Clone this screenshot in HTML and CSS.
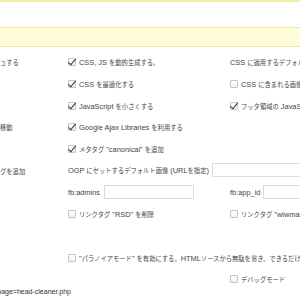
FILE: index.html
```html
<!DOCTYPE html>
<html lang="ja">
<head>
  <meta charset="UTF-8">
  <title>Head Cleaner</title>
  <link rel="stylesheet" href="styles.css">
</head>
<body>
  <div class="notice-prev"></div>
  <div class="notice"></div>

  <div class="form">
    <div class="label"><span class="jp">ュする</span></div>
    <div class="field"><span class="cb on"></span>CSS, JS <span class="jp">を動的生成する。</span></div>
    <div class="field">CSS <span class="jp">に適用するデフォルトのメディアタイプ</span></div>

    <div class="label"></div>
    <div class="field"><span class="cb on"></span>CSS <span class="jp">を最適化する</span></div>
    <div class="field"><span class="cb"></span>CSS <span class="jp">に含まれる画像をデータスキームに変換する</span></div>

    <div class="label"></div>
    <div class="field"><span class="cb on"></span>JavaScript <span class="jp">を小さくする</span></div>
    <div class="field"><span class="cb on"></span><span class="jp">フッタ領域の</span> JavaScript <span class="jp">も対象にする</span></div>

    <div class="label"><span class="jp">移動</span></div>
    <div class="field wide"><span class="cb on"></span>Google Ajax Libraries <span class="jp">を利用する</span></div>

    <div class="label"></div>
    <div class="field wide"><span class="cb on"></span><span class="jp">メタタグ</span> "canonical" <span class="jp">を追加</span></div>

    <div class="label"><span class="jp">グを追加</span></div>
    <div class="field wide">OGP <span class="jp">にセットするデフォルト画像</span> (URL<span class="jp">を指定</span>) <span class="input ogp"></span></div>

    <div class="label"></div>
    <div class="field">fb:admins <span class="input small"></span></div>
    <div class="field">fb:app_id <span class="input"></span></div>

    <div class="label"></div>
    <div class="field"><span class="cb"></span><span class="jp">リンクタグ</span> "RSD" <span class="jp">を削除</span></div>
    <div class="field"><span class="cb"></span><span class="jp">リンクタグ</span> "wlwmanifest" <span class="jp">を削除</span></div>

    <div class="label"></div>
    <div class="field wide"></div>

    <div class="label"></div>
    <div class="field wide"><span class="cb"></span>"<span class="jp">パラノイアモード</span>" <span class="jp">を有効にする。</span>HTML<span class="jp">ソースから無駄を省き、できるだけ軽量化します。</span></div>

    <div class="label"></div>
    <div class="field"></div>
    <div class="field"><span class="cb"></span><span class="jp">デバッグモード</span></div>
  </div>

  <div class="status">http://example.com/wp-admin/options-general.php?page=head-cleaner.php</div>
</body>
</html>
```

FILE: styles.css
```css
* {
  box-sizing: border-box;
}

body {
  margin: 0;
  width: 300px;
  height: 300px;
  overflow: hidden;
  position: relative;
  background: #fff;
  font-family: 'Liberation Sans', 'Noto Sans CJK JP', sans-serif;
  font-size: 7.4px;
  color: #444;
  white-space: nowrap;
}

.jp {
  font-size: 6.3px;
}

.notice-prev {
  height: 2px;
  background: #f3eca8;
  margin-bottom: 25px;
}

.notice {
  height: 20px;
  margin: 0 -10px;
  background: #fffcda;
  border-top: 1px solid #efe6a2;
  border-bottom: 1px solid #efe6a2;
}

.form {
  display: grid;
  grid-template-columns: 68px 162px 1fr;
  grid-auto-rows: 21.7px;
  align-items: center;
  margin-top: 5px;
}

.wide {
  grid-column: span 2;
}

.cb {
  display: inline-block;
  position: relative;
  vertical-align: middle;
  width: 8px;
  height: 8px;
  margin: -2px 3px 0 0;
  border: 1px solid #c4c4c4;
  border-radius: 1px;
  background: linear-gradient(#fff, #f1f1f1);
}

.cb.on::after {
  content: '';
  position: absolute;
  left: 1px;
  top: -2px;
  width: 3px;
  height: 7px;
  border-right: 1.6px solid #333;
  border-bottom: 1.6px solid #333;
  transform: rotate(40deg);
}

.input {
  display: inline-block;
  vertical-align: middle;
  width: 80px;
  height: 14px;
  margin: -2px 0 0 1px;
  border: 1px solid #dcdcdc;
  background: #fff;
}

.input.ogp {
  width: 120px;
}

.input.small {
  width: 90px;
  margin-left: 2px;
}

.status {
  position: absolute;
  right: 229px;
  bottom: 5px;
  font-size: 7px;
  color: #333;
}
```
